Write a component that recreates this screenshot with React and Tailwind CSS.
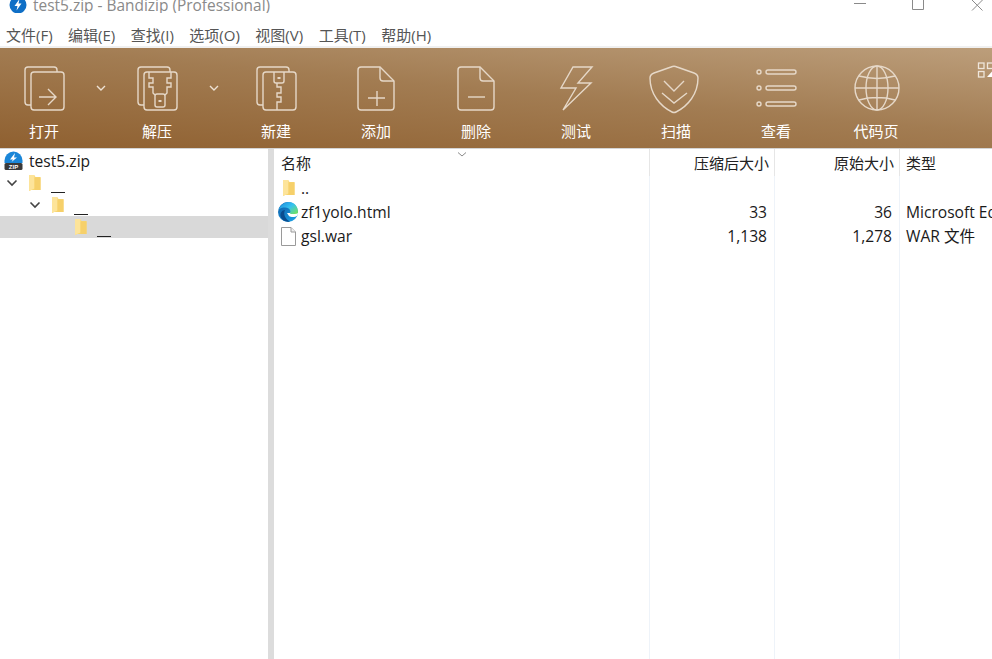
const uiFont = { fontFamily: '"Open Sans", "Noto Sans CJK SC", sans-serif' };

function BackPage() {
    return <path d="M11 41H8a3 3 0 0 1-3-3V6a3 3 0 0 1 3-3H34a3 3 0 0 1 3 3V8" />;
}

function FrontPage() {
    return <path d="M14 8H41a3 3 0 0 1 3 3V43a3 3 0 0 1-3 3H14a3 3 0 0 1-3-3V11a3 3 0 0 1 3-3Z" />;
}

const toolIcons = {
    open: (
        <>
            <BackPage />
            <FrontPage />
            <path d="M19 33H36M28 25l8 8-8 8" />
        </>
    ),
    extract: (
        <>
            <BackPage />
            <FrontPage />
            <path d="M16 8V14H20V19H16V23H20V29L22 31M38 8V14H34V19H38V23H34V29L32 31" />
            <rect x="22" y="30" width="10" height="13" rx="2" />
            <path d="M25.5 37H28.5" strokeWidth="2" />
        </>
    ),
    create: (
        <>
            <BackPage />
            <FrontPage />
            <path d="M22 8V17a2 2 0 0 0 2 2H30a2 2 0 0 0 2-2V8" />
            <path d="M25.5 14H28.5" strokeWidth="2" />
            <path d="M25 19V23H29V29H25V33H29V38H25V46" />
        </>
    ),
    add: (
        <>
            <path d="M28 3H9a3 3 0 0 0-3 3V43a3 3 0 0 0 3 3H39a3 3 0 0 0 3-3V17Z" />
            <path d="M28 3V14a3 3 0 0 0 3 3H42" />
            <path d="M16 34H33M25 27V42" />
        </>
    ),
    remove: (
        <>
            <path d="M28 3H9a3 3 0 0 0-3 3V43a3 3 0 0 0 3 3H39a3 3 0 0 0 3-3V17Z" />
            <path d="M28 3V14a3 3 0 0 0 3 3H42" />
            <path d="M16 33H33" />
        </>
    ),
    test: <path d="M21 3H40L26 19H39L11 46L24 24H9Z" />,
    scan: (
        <>
            <path d="M19 3Q22 1.5 25 3L42 9Q46 10.5 46 14C46 30 36 42 24 48Q22 49 20 48C8 42 -2 30 -2 14Q-2 10.5 2 9Z" />
            <path d="M12 17L22 27L32 17M10 29L22 39L35 29" />
        </>
    ),
    view: (
        <>
            <circle cx="7" cy="8" r="2" />
            <circle cx="7" cy="24" r="2" />
            <circle cx="7" cy="40" r="2" />
            <rect x="14" y="6" width="30" height="4" rx="2" />
            <rect x="14" y="22" width="30" height="4" rx="2" />
            <rect x="14" y="38" width="30" height="4" rx="2" />
        </>
    ),
    codepage: (
        <>
            <circle cx="25" cy="24" r="22" />
            <ellipse cx="25" cy="24" rx="11" ry="22" />
            <path d="M25 2V46M3 24H47M7 12C18 15 32 15 43 12M7 36C18 33 32 33 43 36" />
        </>
    ),
};

const menus = ["文件(F)", "编辑(E)", "查找(I)", "选项(O)", "视图(V)", "工具(T)", "帮助(H)"];

const tools = [
    { name: "打开", icon: "open", width: "w-[88px]", more: true },
    { name: "解压", icon: "extract", width: "w-[88px]", more: true },
    { name: "新建", icon: "create", width: "w-[100px]" },
    { name: "添加", icon: "add", width: "w-[100px]" },
    { name: "删除", icon: "remove", width: "w-[100px]" },
    { name: "测试", icon: "test", width: "w-[100px]" },
    { name: "扫描", icon: "scan", width: "w-[100px]" },
    { name: "查看", icon: "view", width: "w-[100px]" },
    { name: "代码页", icon: "codepage", width: "w-[100px]" },
];

function ToolButton({ tool }) {
    return (
        <div className={`${tool.width} flex flex-col items-center pt-4 shrink-0`}>
            <svg width="48" height="48" viewBox="0 0 48 48" fill="none" stroke="#e6d8c8" strokeWidth="1.4" className="overflow-visible">
                {toolIcons[tool.icon]}
            </svg>
            <div className="mt-2 text-[15px] leading-[22px] text-white">{tool.name}</div>
        </div>
    );
}

function MoreArrow() {
    return (
        <div className="w-[25px] shrink-0 flex justify-center pt-[37px]">
            <svg width="10" height="6" viewBox="0 0 10 6" fill="none" stroke="#eee2d4" strokeWidth="1.4">
                <path d="M1 1L5 5L9 1" />
            </svg>
        </div>
    );
}

function FolderIcon() {
    return (
        <svg width="13" height="18" viewBox="0 0 13 18" className="shrink-0">
            <path d="M1 1H6L7.5 3H12.5V16H3L1 17Z" fill="#f8d670" />
            <path d="M1 1H6.5V14.5L1 17Z" fill="#fde49a" />
            <path d="M6.5 3.5H12.5V16H6.5Z" fill="#f6d06a" />
        </svg>
    );
}

function Chevron() {
    return (
        <svg width="12" height="8" viewBox="0 0 12 8" fill="none" stroke="#444444" strokeWidth="1.6" className="shrink-0">
            <path d="M1.5 1.5L6 6L10.5 1.5" />
        </svg>
    );
}

function TreeRow({ indent, open, selected }) {
    return (
        <div className={`h-[22px] flex items-center ${indent} ${selected ? "bg-[#d9d9d9]" : ""}`}>
            <div className="w-[28px] pl-[6px] shrink-0">{open && <Chevron />}</div>
            <FolderIcon />
            <span className="ml-[10px] w-[14px] h-[16px] border-b border-[#222222] shrink-0 self-end mb-[1px]" />
        </div>
    );
}

function EdgeIcon() {
    return (
        <svg width="22" height="22" viewBox="0 0 22 22" className="shrink-0">
            <defs>
                <linearGradient id="edgeBlue" x1="0" y1="0" x2="0.7" y2="1">
                    <stop offset="0" stopColor="#0c59a4" />
                    <stop offset="1" stopColor="#1b9de2" />
                </linearGradient>
                <linearGradient id="edgeGreen" x1="0" y1="0" x2="1" y2="0.8">
                    <stop offset="0" stopColor="#1b86d8" />
                    <stop offset="0.55" stopColor="#35c1f1" />
                    <stop offset="1" stopColor="#6fe06a" />
                </linearGradient>
            </defs>
            <circle cx="11" cy="11" r="10" fill="url(#edgeBlue)" />
            <path d="M10 12H21L20.5 14.5C18 16.5 14 16.5 12 15Z" fill="#ffffff" />
            <path d="M1.5 9C3 4 7.5 1 11.5 1C17 1 21 5 21 11.5C21 12.5 19 13 15 13C12 13 13 12 13.5 10.5C13 8 11 6.5 8 6.5C5.5 6.5 3 7 1.5 9Z" fill="url(#edgeGreen)" />
            <path d="M8 9C6 13 8 18 13 20.5C8.5 21.5 4.5 19 3.5 15C3 12 5 9 8 9Z" fill="#0a4c8f" />
        </svg>
    );
}

function FileIcon() {
    return (
        <svg width="15" height="19" viewBox="0 0 15 19" className="shrink-0">
            <path d="M0.5 0.5H10L14.5 5V18.5H0.5Z" fill="#ffffff" stroke="#9a9a9a" />
            <path d="M10 0.5V5H14.5" fill="#f0f0f0" stroke="#9a9a9a" />
        </svg>
    );
}

function ZipIcon() {
    return (
        <svg width="19" height="20" viewBox="0 0 19 20" className="shrink-0">
            <path d="M0.5 12V9.5a9 9 0 0 1 18 0V12Z" fill="#1a86d8" />
            <path d="M11 2L6 8.5H9L7.5 11L13 6.5H10Z" fill="#ffffff" />
            <rect x="0.5" y="12" width="18" height="7" rx="1.5" fill="#3a3a3a" />
            <text x="9.5" y="18" textAnchor="middle" fontSize="6" fontWeight="700" fill="#ffffff" fontFamily="Liberation Sans, sans-serif">ZIP</text>
        </svg>
    );
}

const files = [
    { name: "..", icon: <FolderIcon />, packed: "", size: "", type: "" },
    { name: "zf1yolo.html", icon: <EdgeIcon />, packed: "33", size: "36", type: "Microsoft Edge HTML Document" },
    { name: "gsl.war", icon: <FileIcon />, packed: "1,138", size: "1,278", type: "WAR 文件" },
];

function HeaderCell({ className, children }) {
    return <div className={`h-[27px] shrink-0 border-r border-[#e6e6e6] text-[15px] leading-[29px] text-[#222222] ${className}`}>{children}</div>;
}

function NumberColumn({ title, field }) {
    return (
        <div className="w-[125px] shrink-0 flex flex-col">
            <HeaderCell className="pr-[5px] text-right">{title}</HeaderCell>
            <div className="flex-1 border-r border-[#eef3f9]">
                {files.map((file) => (
                    <div key={file.name} className="h-[24px] pr-[7px] text-right leading-[24px] text-[#1a1a1a]">
                        {file[field]}
                    </div>
                ))}
            </div>
        </div>
    );
}

export default function App() {
    return (
        <div className="w-[992px] h-[659px] flex flex-col overflow-hidden bg-white text-[15.6px]" style={uiFont}>
            {/* title bar, cut off by the top of the screenshot */}
            <div className="h-[13px] shrink-0 flex items-end overflow-hidden pl-[9px]">
                <svg width="18" height="18" viewBox="0 0 18 18" className="shrink-0 mb-[-1px]">
                    <circle cx="9" cy="9" r="8.5" fill="#0f6fc6" />
                    <path d="M10.5 3L5.5 10H8.5L7.5 14.5L12.5 7.5H9.5Z" fill="#ffffff" />
                </svg>
                <span className="ml-[6px] text-[15.45px] leading-[20px] mb-[-2px] text-[#8a8a8a] whitespace-nowrap">test5.zip - Bandizip (Professional)</span>
                <div className="ml-auto flex items-start self-start pr-[9px]">
                    <svg width="12" height="4" viewBox="0 0 12 4" className="mt-[2px]"><path d="M0 1.5H12" stroke="#8a8a8a" /></svg>
                    <svg width="12" height="10" viewBox="0 0 12 10" className="ml-[46px]"><path d="M0.5 0V9.5H11.5V0" fill="none" stroke="#8a8a8a" /></svg>
                    <svg width="12" height="11" viewBox="0 0 12 11" className="ml-[47px]"><path d="M1 0L11.5 10.5M11.5 0L1 10.5" stroke="#8a8a8a" /></svg>
                </div>
            </div>

            <div className="h-[33px] shrink-0 flex items-end pl-[6px] gap-[15.5px] text-[15px] text-[#555555]">
                {menus.map((menu) => (
                    <span key={menu} className="leading-[22px]">{menu}</span>
                ))}
            </div>
            <div className="h-[2px] shrink-0 bg-[#f0f0f0]" />

            <div className="h-[100px] shrink-0 flex bg-[linear-gradient(185deg,#bc9e7b_0%,#a27c52_46%,#8f6030_100%)]">
                {tools.map((tool) => (
                    <div key={tool.name} className="flex shrink-0">
                        <ToolButton tool={tool} />
                        {tool.more && <MoreArrow />}
                    </div>
                ))}
                <svg width="15" height="16" viewBox="0 0 15 16" className="mt-[14px] ml-auto shrink-0" fill="none" stroke="#efe6db" strokeWidth="1.3">
                    <rect x="1.5" y="1" width="5.5" height="5.5" />
                    <rect x="10.5" y="1" width="5.5" height="5.5" />
                    <rect x="1.5" y="9.5" width="5.5" height="5.5" />
                    <path d="M10 15L15 9.5V15Z" fill="#ffffff" stroke="none" />
                </svg>
            </div>
            <div className="h-px shrink-0 bg-[#d4d4d4]" />

            <div className="flex-1 flex min-h-0">
                <div className="w-[268px] shrink-0 pt-px">
                    <div className="h-[22px] pl-[4px] flex items-center gap-[6px] text-[#1a1a1a]">
                        <ZipIcon />
                        <span className="leading-[22px]">test5.zip</span>
                    </div>
                    <TreeRow indent="pl-0" open />
                    <TreeRow indent="pl-[23px]" open />
                    <TreeRow indent="pl-[46px]" selected />
                </div>
                <div className="w-[6px] shrink-0 bg-[#dcdcdc]" />
                <div className="flex-1 min-w-0 flex overflow-hidden">
                    <div className="w-[376px] shrink-0 flex flex-col relative">
                        <HeaderCell className="pl-[7px]">名称</HeaderCell>
                        <svg width="10" height="5" viewBox="0 0 10 5" fill="none" stroke="#8a8a8a" className="absolute left-[183px] top-[3px]">
                            <path d="M1 0.5L5 4L9 0.5" />
                        </svg>
                        <div className="flex-1 border-r border-[#eef3f9]">
                            {files.map((file) => (
                                <div key={file.name} className="h-[24px] flex items-center text-[#1a1a1a]">
                                    <div className="w-[27px] flex justify-center shrink-0 pl-[1px]">{file.icon}</div>
                                    <span className="leading-[24px]">{file.name}</span>
                                </div>
                            ))}
                        </div>
                    </div>
                    <NumberColumn title="压缩后大小" field="packed" />
                    <NumberColumn title="原始大小" field="size" />
                    <div className="flex-1 min-w-0 flex flex-col pl-[6px] whitespace-nowrap">
                        <div className="h-[27px] text-[15px] leading-[29px] text-[#222222]">类型</div>
                        {files.map((file) => (
                            <div key={file.name} className="h-[24px] leading-[24px] text-[#1a1a1a]">{file.type}</div>
                        ))}
                    </div>
                </div>
            </div>
        </div>
    );
}
